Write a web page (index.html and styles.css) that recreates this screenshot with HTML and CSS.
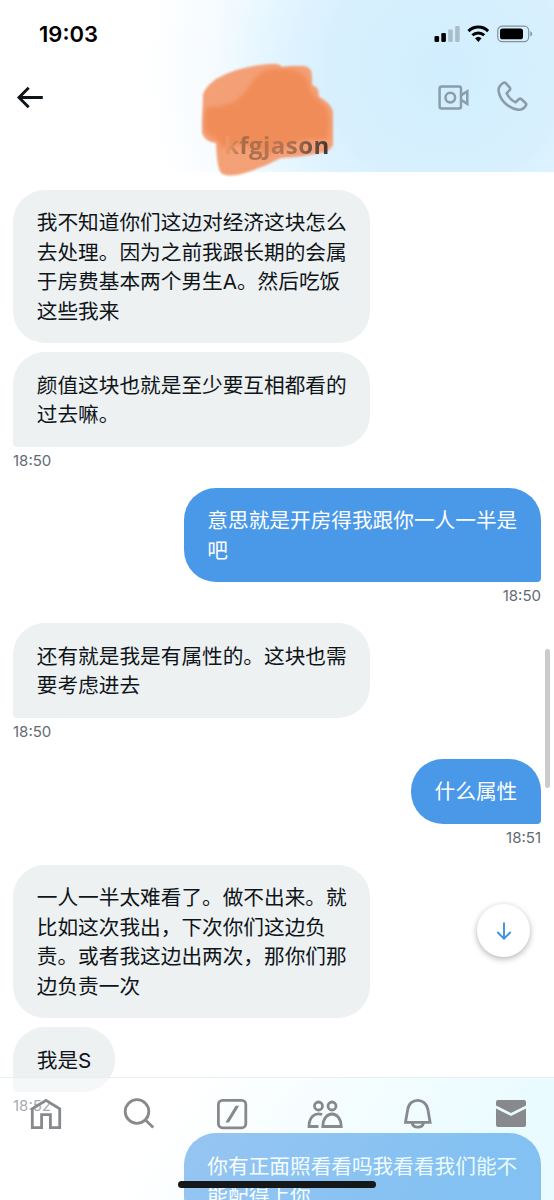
FILE: index.html
```html
<!DOCTYPE html>
<html lang="zh-CN">
<head>
  <meta charset="UTF-8">
  <meta name="viewport" content="width=device-width, initial-scale=1.0">
  <title>Messages</title>
  <link rel="stylesheet" href="styles.css">
</head>
<body>
  <div class="phone">
    <header class="header">
      <!-- Status bar -->
      <div class="status">
        <span class="clock">19:03</span>
        <svg class="status-icons" width="100" height="18" viewBox="0 0 100 18">
          <rect x="0.5" y="11" width="4.6" height="6" rx="1.2"/>
          <rect x="7.3" y="8" width="4.6" height="9" rx="1.2"/>
          <g fill="#aabdcb">
            <rect x="14.2" y="4.5" width="4.6" height="12.5" rx="1.2"/>
            <rect x="21.1" y="1" width="4.6" height="16" rx="1.2"/>
          </g>
          <g fill="none" stroke="#000" stroke-width="3">
            <path d="M34.5 6.1a14 14 0 0 1 19.6 0"/>
            <path d="M38.4 10.3a8.4 8.4 0 0 1 11.8 0"/>
          </g>
          <path d="M41 13.3a4.8 4.8 0 0 1 6.6 0L44.3 16.9z"/>
          <rect x="63.7" y="1.2" width="31" height="15.4" rx="4.6" fill="none" stroke="#82929c" stroke-width="1.2"/>
          <rect x="66" y="3.5" width="23" height="10.8" rx="2.6"/>
          <path d="M96.4 6.3c2.3.9 2.3 4.3 0 5.2z" fill="#82929c"/>
        </svg>
      </div>
      <!-- Title bar -->
      <div class="titlebar">
        <svg class="back" width="28" height="24" viewBox="0 0 28 24">
          <path d="M26.8 12.5H3M12.7 2.8L3 12.5l9.7 9.7" fill="none" stroke="#0f1419" stroke-width="2.9"/>
        </svg>
        <div class="actions">
          <svg width="32" height="26" viewBox="0 0 32 26" fill="none" stroke="#8b9dab" stroke-width="2.5">
            <rect x="2.6" y="2.6" width="21.4" height="22" rx="2"/>
            <circle cx="13.3" cy="13.6" r="4.8"/>
            <path d="M24 11.4L30.3 7.3v12.6L24 15.8"/>
          </svg>
          <svg width="32" height="32" viewBox="0 0 32 32" fill="none" stroke="#8b9dab" stroke-width="2.6" stroke-linejoin="round">
            <path d="M9.7 2.1L13.6 6.4c.8.9.7 2 0 2.8l-3 3.1c2.1 4.3 5 7.1 9 9l3.2-3.1c.8-.7 1.8-.8 2.7 0l4 3.8c.9.8.9 1.8.2 2.7-1.7 2.6-4.1 4.6-8 3.9C11.5 26.8 4 19 2.6 10 2.2 6.8 4 4.2 7 2c1-.7 1.9-.7 2.7.1z"/>
          </svg>
        </div>
      </div>
      <!-- Avatar and name -->
      <div class="profile">
        <svg class="scribble" width="140" height="120" viewBox="0 0 140 120">
          <g class="soft">
            <path d="M5 34Q8 26 18 19C32 11 51 5 73 4Q80 3 84 7Q98 5 107 6Q114 8 114 16V25Q121 26 121 37Q133 43 135 52V85Q131 93 121 93Q106 97 83 98Q68 106 53 111Q31 119 23 113Q19 108 18 83Q7 82 4 73Z" fill="#f4a077"/>
          </g>
          <g class="softer">
            <path d="M55 21Q64 7 83 9Q111 8 111 28L118 38Q131 46 131 60V78Q122 82 113 79Q90 84 70 94L33 99Q22 96 22 82L9 73Q4 66 8 47Q22 48 36 42Q47 34 55 21Z" fill="#f08c58"/>
            <path d="M24 88Q42 80 66 94Q58 104 29 110Q21 103 24 88Z" fill="#f3a077"/>
          </g>
        </svg>
        <span class="name">kfgjason</span>
      </div>
    </header>

    <main class="chat">
      <div class="group">
        <p class="bubble">我不知道你们这边对经济这块怎么<br>去处理。因为之前我跟长期的会属<br>于房费基本两个男生A。然后吃饭<br>这些我来</p>
        <p class="bubble last">颜值这块也就是至少要互相都看的<br>过去嘛。</p>
        <span class="time">18:50</span>
      </div>
      <div class="group mine">
        <p class="bubble last">意思就是开房得我跟你一人一半是<br>吧</p>
        <span class="time">18:50</span>
      </div>
      <div class="group">
        <p class="bubble last">还有就是我是有属性的。这块也需<br>要考虑进去</p>
        <span class="time">18:50</span>
      </div>
      <div class="group mine">
        <p class="bubble last">什么属性</p>
        <span class="time">18:51</span>
      </div>
      <div class="group">
        <p class="bubble">一人一半太难看了。做不出来。就<br>比如这次我出，下次你们这边负<br>责。或者我这边出两次，那你们那<br>边负责一次</p>
        <p class="bubble last">我是S</p>
        <span class="time">18:52</span>
      </div>
      <div class="group mine">
        <p class="bubble last">你有正面照看看吗我看看我们能不<br>能配得上你</p>
      </div>
    </main>

    <div class="scrollbar"></div>
    <button class="jump" aria-label="Jump to latest">
      <svg width="18" height="20" viewBox="0 0 18 20">
        <path d="M9 1.5v16M2.3 11L9 17.6l6.7-6.6" fill="none" stroke="#3d92e3" stroke-width="1.9"/>
      </svg>
    </button>

    <!-- Translucent tab bar, the chat shows through -->
    <nav class="tabs">
      <svg width="32" height="32" viewBox="0 0 32 32">
        <path d="M2.3 10.8L16 2.4l13.7 8.4v18.8h-9.3v-13h-8.8v13H2.3z"/>
      </svg>
      <svg width="32" height="32" viewBox="0 0 32 32">
        <circle cx="14" cy="13.5" r="11.8"/>
        <path d="M22.2 21.7l8 7.8"/>
      </svg>
      <svg width="32" height="32" viewBox="0 0 32 32">
        <rect x="2.4" y="2.4" width="27.4" height="27.4" rx="4"/>
        <path d="M9.4 24.4L19.6 7.8h3.6L13 24.4z" class="solid"/>
      </svg>
      <svg width="36" height="32" viewBox="0 0 36 32">
        <circle cx="11.5" cy="8" r="4"/>
        <circle cx="25" cy="8" r="4"/>
        <path d="M15.2 16.5C7.2 13.8 2 19.6 2 28.5h9.5M15.8 28.5C16 11.8 34 11.8 34.2 28.5z"/>
      </svg>
      <svg width="32" height="32" viewBox="0 0 32 32">
        <path d="M3.5 24.3L5.7 11.5C7.3-.8 23.9-.8 25.9 11.5l2.2 12.8zM10.1 25c1.1 5.5 10.3 5.5 11.4 0"/>
      </svg>
      <svg width="32" height="32" viewBox="0 0 32 32">
        <path d="M1 4a2 2 0 0 1 2-2h26a2 2 0 0 1 2 2v3.6l-15 7.4-15-7.4z" class="solid"/>
        <path d="M1 10.6l15 7.4 15-7.4V27a2 2 0 0 1-2 2H3a2 2 0 0 1-2-2z" class="solid"/>
      </svg>
    </nav>
    <div class="home-indicator"></div>
  </div>
</body>
</html>
```

FILE: styles.css
```css
* {
  box-sizing: border-box;
}
body {
  margin: 0;
  background: #fff;
  color: #0f1419;
  font-family: Inter, "Noto Sans CJK SC", sans-serif;
}
.phone {
  position: relative;
  height: 1200px;
  overflow: hidden;
}

/* Header */
.header {
  position: relative;
  height: 172px;
  background: radial-gradient(ellipse 300px 290px at 445px 70px, #d1eefe 0%, #d8f0fe 40%, #e3f5ff 58%, #f6fbff 78%, #fff 100%);
}
.status {
  display: flex;
  justify-content: space-between;
  align-items: center;
  height: 68px;
  padding: 0 20px 0 39px;
}
.clock {
  color: #000;
  font-size: 22px;
  font-weight: 600;
}
.titlebar {
  display: flex;
  justify-content: space-between;
  align-items: center;
  height: 58px;
  padding: 0 26px 0 16px;
}
.actions {
  display: flex;
  align-items: center;
  gap: 27px;
}
.profile {
  position: absolute;
  top: 60px;
  left: 198px;
  width: 140px;
}
.scribble {
  display: block;
}
.soft {
  filter: blur(1.3px);
}
.softer {
  filter: blur(2px);
}
.name {
  position: absolute;
  left: 26px;
  top: 68px;
  font-family: "Open Sans", sans-serif;
  font-size: 24px;
  font-weight: 700;
  line-height: 33px;
  letter-spacing: 0.45px;
  background: linear-gradient(100deg, #ef9866 6%, #a56c48 20%, #b87554 48%, #a76c4d 68%, #4b3c37 92%, #332f30);
  -webkit-background-clip: text;
  background-clip: text;
  color: transparent;
}

/* Messages */
.chat {
  padding: 18px 13px 0;
}
.group {
  display: flex;
  flex-direction: column;
  align-items: flex-start;
}
.group.mine {
  align-items: flex-end;
}
.bubble {
  margin: 0 0 9px;
  padding: 18.2px 23.8px 16.8px;
  border-radius: 32px;
  background: #edf1f2;
  font-size: 20.67px;
  line-height: 29.6px;
  white-space: nowrap;
}
.bubble.last {
  margin-bottom: 0;
  border-bottom-left-radius: 4px;
}
.mine .bubble {
  background: #4a99e9;
  color: #fff;
}
.mine .bubble.last {
  border-radius: 32px 32px 4px 32px;
}
.time {
  height: 41.4px;
  padding-top: 4.4px;
  color: #626b73;
  font-size: 15px;
  line-height: 20px;
}

/* Floating controls */
.scrollbar {
  position: absolute;
  top: 649px;
  right: 4px;
  width: 5px;
  height: 139px;
  border-radius: 3px;
  background: #cbcbcb;
}
.jump {
  position: absolute;
  top: 904px;
  right: 24px;
  display: flex;
  justify-content: center;
  align-items: center;
  width: 53px;
  height: 53px;
  padding: 0;
  border: none;
  border-radius: 50%;
  background: #fff;
  box-shadow: 0 2px 6px rgba(0, 0, 0, 0.3);
}
.tabs {
  position: absolute;
  left: 0;
  right: 0;
  bottom: 0;
  display: grid;
  grid-template-columns: repeat(6, 93px);
  justify-content: center;
  justify-items: center;
  align-items: flex-start;
  height: 123px;
  padding: 20px 0 0 2px;
  border-top: 1px solid #e9eef1;
  background: linear-gradient(125deg, rgba(255, 255, 255, 0.43) 30%, rgba(206, 246, 255, 0.43) 85%);
}
.tabs svg {
  fill: none;
  stroke: #87898c;
  stroke-width: 2.8;
}
.tabs .solid {
  fill: #87898c;
  stroke: none;
}
.home-indicator {
  position: absolute;
  bottom: 12px;
  left: 178px;
  width: 198px;
  height: 7px;
  border-radius: 4px;
  background: #151719;
}
```
